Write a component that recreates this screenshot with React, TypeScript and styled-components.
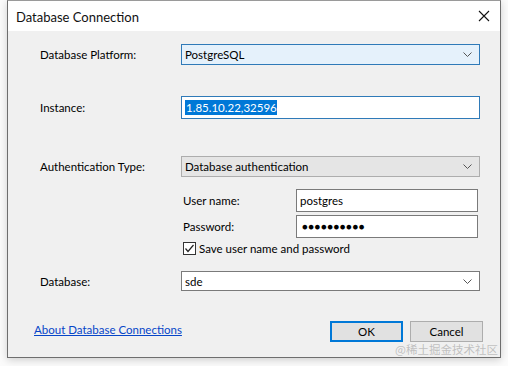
import styled, { createGlobalStyle } from 'styled-components';

const GlobalStyle = createGlobalStyle`
  html, body {
    margin: 0;
    padding: 0;
    background: #ffffff;
  }
  body {
    font-family: "Segoe UI", Lato, "Noto Sans", sans-serif;
    font-size: 11.5px;
    color: #000;
  }
`;

const Stage = styled.div`
  position: relative;
  width: 508px;
  height: 366px;
  overflow: hidden;
  background: #fbfbfb;
`;

const Window = styled.div`
  margin-left: 7px;
  width: 492px;
  height: 356px;
  border: 1px solid #6e6e6e;
  border-top-color: #9a9a9a;
  background: #f0f0f0;
  display: flex;
  flex-direction: column;
  box-shadow: 0 2px 8px rgba(0, 0, 0, 0.18);
`;

const TitleBar = styled.div`
  height: 30px;
  background: #ffffff;
  display: flex;
  align-items: center;
  justify-content: space-between;
  padding: 0 10px 0 8px;
`;

const Title = styled.span`
  font-size: 13px;
  color: #111;
  margin-top: 1px;
`;

const Body = styled.div`
  flex: 1;
  display: flex;
  flex-direction: column;
  padding: 13px 20px 0 32px;
`;

const Row = styled.div<{ $top: number }>`
  display: grid;
  grid-template-columns: 141px 299px;
  align-items: center;
  margin-top: ${(p) => p.$top}px;
`;

const Label = styled.span`
  white-space: nowrap;
`;

const Field = styled.div<{ $h: number; $bg: string; $border: string }>`
  box-sizing: border-box;
  height: ${(p) => p.$h}px;
  background: ${(p) => p.$bg};
  border: 1px solid ${(p) => p.$border};
  display: flex;
  align-items: center;
  justify-content: space-between;
  padding: 0 7px 0 3px;
  white-space: nowrap;
`;

const Selected = styled.span`
  background: #0078d7;
  color: #fff;
  padding: 1px 0 1px 1px;
`;

const Sub = styled.div<{ $top: number }>`
  display: grid;
  grid-template-columns: 113px 182px;
  align-items: center;
  margin-left: 143px;
  margin-top: ${(p) => p.$top}px;
`;

const Dots = styled.span`
  font-size: 9.5px;
  letter-spacing: 0.6px;
  padding-left: 2px;
`;

const CheckRow = styled.div`
  display: flex;
  align-items: center;
  gap: 3px;
  margin-left: 143px;
  margin-top: 4px;
  height: 13px;
`;

const Footer = styled.div`
  display: flex;
  align-items: center;
  margin-top: 30px;
  margin-left: -6px;
  margin-right: -3px;
`;

const Link = styled.a`
  color: #0645c8;
  text-decoration: underline;
  flex: 1;
  margin-top: -4px;
`;

const Button = styled.div<{ $default?: boolean }>`
  box-sizing: border-box;
  width: 73px;
  height: 21px;
  background: #e1e1e1;
  border: ${(p) => (p.$default ? '2px solid #0078d7' : '1px solid #adadad')};
  display: flex;
  align-items: center;
  justify-content: center;
  margin-left: 7px;
`;

const Watermark = styled.span`
  position: absolute;
  right: 10px;
  top: 341px;
  font-family: "Noto Sans CJK SC", sans-serif;
  font-size: 11.5px;
  color: rgba(150, 150, 150, 0.55);
`;

const Chevron = () => (
  <svg width="9" height="5" viewBox="0 0 9 5" fill="none">
    <path d="M0.5 0.5 L4.5 4.5 L8.5 0.5" stroke="#555" strokeWidth="1" />
  </svg>
);

const Close = () => (
  <svg width="12" height="12" viewBox="0 0 12 12" fill="none">
    <path d="M1 1 L11 11 M11 1 L1 11" stroke="#111" strokeWidth="1.1" />
  </svg>
);

const Checkbox = () => (
  <svg width="13" height="13" viewBox="0 0 13 13" fill="none">
    <rect x="0.5" y="0.5" width="12" height="12" fill="#fff" stroke="#333" />
    <path d="M2.5 6.5 L5 9.5 L10.5 3" stroke="#222" strokeWidth="1.2" />
  </svg>
);

export default function App() {
  return (
    <Stage>
      <GlobalStyle />
      <Window>
        <TitleBar>
          <Title>Database Connection</Title>
          <Close />
        </TitleBar>
        <Body>
          <Row $top={0}>
            <Label>Database Platform:</Label>
            <Field $h={21} $bg="#e5f1fb" $border="#2f7ab8">
              <span>PostgreSQL</span>
              <Chevron />
            </Field>
          </Row>
          <Row $top={31}>
            <Label>Instance:</Label>
            <Field $h={23} $bg="#ffffff" $border="#2f7ab8">
              <Selected>1.85.10.22,32596</Selected>
            </Field>
          </Row>
          <Row $top={37}>
            <Label>Authentication Type:</Label>
            <Field $h={21} $bg="#e5e5e5" $border="#adadad">
              <span>Database authentication</span>
              <Chevron />
            </Field>
          </Row>
          <Sub $top={12}>
            <Label>User name:</Label>
            <Field $h={23} $bg="#ffffff" $border="#7a7a7a">
              <span>postgres</span>
            </Field>
          </Sub>
          <Sub $top={3}>
            <Label>Password:</Label>
            <Field $h={23} $bg="#ffffff" $border="#7a7a7a">
              <Dots>●●●●●●●●●●</Dots>
            </Field>
          </Sub>
          <CheckRow>
            <Checkbox />
            <span>Save user name and password</span>
          </CheckRow>
          <Row $top={16}>
            <Label>Database:</Label>
            <Field $h={20} $bg="#ffffff" $border="#7a7a7a">
              <span>sde</span>
              <Chevron />
            </Field>
          </Row>
          <Footer>
            <Link href="#">About Database Connections</Link>
            <Button $default>OK</Button>
            <Button>Cancel</Button>
          </Footer>
        </Body>
      </Window>
      <Watermark>@稀土掘金技术社区</Watermark>
    </Stage>
  );
}
